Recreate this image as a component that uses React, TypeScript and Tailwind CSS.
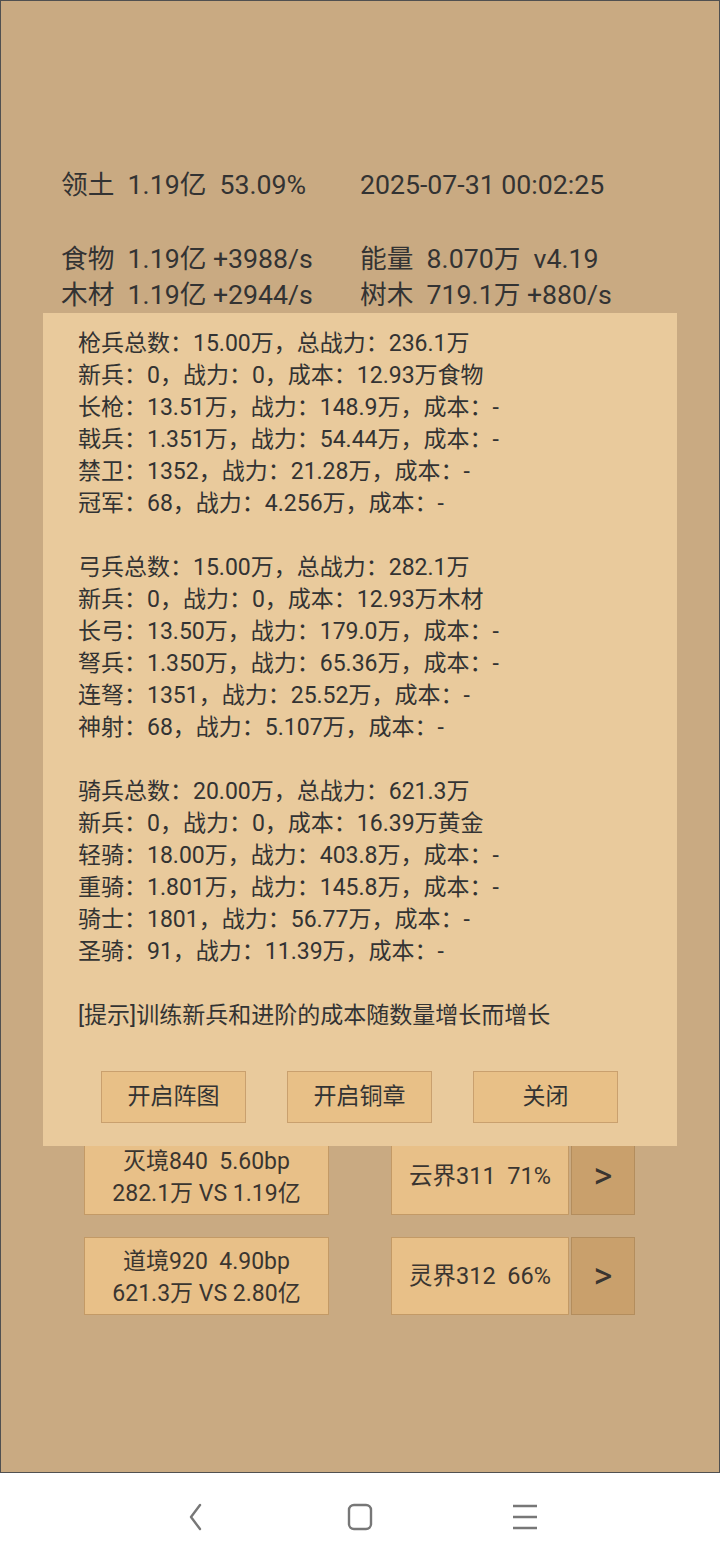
import React from "react";

const font = { fontFamily: "Roboto, 'Noto Sans CJK SC', sans-serif" };

const sections: string[][] = [
  [
    "枪兵总数：15.00万，总战力：236.1万",
    "新兵：0，战力：0，成本：12.93万食物",
    "长枪：13.51万，战力：148.9万，成本：-",
    "戟兵：1.351万，战力：54.44万，成本：-",
    "禁卫：1352，战力：21.28万，成本：-",
    "冠军：68，战力：4.256万，成本：-",
  ],
  [
    "弓兵总数：15.00万，总战力：282.1万",
    "新兵：0，战力：0，成本：12.93万木材",
    "长弓：13.50万，战力：179.0万，成本：-",
    "弩兵：1.350万，战力：65.36万，成本：-",
    "连弩：1351，战力：25.52万，成本：-",
    "神射：68，战力：5.107万，成本：-",
  ],
  [
    "骑兵总数：20.00万，总战力：621.3万",
    "新兵：0，战力：0，成本：16.39万黄金",
    "轻骑：18.00万，战力：403.8万，成本：-",
    "重骑：1.801万，战力：145.8万，成本：-",
    "骑士：1801，战力：56.77万，成本：-",
    "圣骑：91，战力：11.39万，成本：-",
  ],
];

function Row({ left, l2, r1, r2 }: { left: string; l2: string; r1: string; r2: string }) {
  return (
    <div className="flex gap-[62px]">
      <button className="w-[245px] h-[78px] pt-[3px] bg-[#e8c088] border border-[#c39a66] flex flex-col items-center justify-center text-[23px] leading-[32px] text-[#3a3530] whitespace-pre">
        <span>{left}</span>
        <span>{l2}</span>
      </button>
      <div className="flex gap-[2px]">
        <button className="w-[178px] h-[78px] pt-[2px] bg-[#e8c088] border border-[#c39a66] flex items-center justify-center text-[23.5px] text-[#3a3530] whitespace-pre">
          {r1}
        </button>
        <button className="w-[64px] h-[78px] bg-[#c9a06c] border border-[#b38d5d] flex items-center justify-center text-[36px] leading-none text-[#3a3530]">
          {r2}
        </button>
      </div>
    </div>
  );
}

export default function App() {
  return (
    <div className="w-[720px] h-[1560px] flex flex-col bg-white" style={font}>
      <div className="relative h-[1473px] bg-[#c9aa82] border border-[#505050] text-[#333]">
        <div className="pt-[166px] pl-[60px] text-[26.7px] leading-[36px] whitespace-pre">
          <div className="grid grid-cols-[299px_1fr]">
            <div>领土  1.19亿  53.09%</div>
            <div>2025-07-31 00:02:25</div>
          </div>
          <div className="grid grid-cols-[299px_1fr] mt-[38px]">
            <div>食物  1.19亿 +3988/s</div>
            <div>能量  8.070万  v4.19</div>
            <div>木材  1.19亿 +2944/s</div>
            <div>树木  719.1万 +880/s</div>
          </div>
        </div>

        <div className="mt-[824px] pl-[83px] flex flex-col gap-[22px]">
          <Row left="灭境840  5.60bp" l2="282.1万 VS 1.19亿" r1="云界311  71%" r2=">" />
          <Row left="道境920  4.90bp" l2="621.3万 VS 2.80亿" r1="灵界312  66%" r2=">" />
        </div>

        <div className="absolute left-[42px] top-[312px] w-[634px] h-[833px] bg-[#e9ca9c] flex flex-col">
          <div className="pt-[15px] pl-[35px] text-[23px] leading-[32px] text-[#333]">
            {sections.map((s, i) => (
              <div key={i} className={i > 0 ? "mt-[32px]" : ""}>
                {s.map((l) => (
                  <div key={l}>{l}</div>
                ))}
              </div>
            ))}
            <div className="mt-[32px]">[提示]训练新兵和进阶的成本随数量增长而增长</div>
          </div>
          <div className="mt-[39px] pl-[58px] flex gap-[41px]">
            {["开启阵图", "开启铜章", "关闭"].map((t) => (
              <button
                key={t}
                className="w-[145px] h-[52px] bg-[#e8c087] border border-[#c9a06e] text-[23px] text-[#333] flex items-center justify-center"
              >
                {t}
              </button>
            ))}
          </div>
        </div>
      </div>

      <div className="flex-1 flex items-center pl-[181px] gap-[137px]">
        <svg width="28" height="30" viewBox="0 0 28 30">
          <path d="M19 3 L10 15 L19 27" fill="none" stroke="#777" strokeWidth="2.4" strokeLinecap="round" strokeLinejoin="round" />
        </svg>
        <svg width="28" height="30" viewBox="0 0 28 30">
          <rect x="3" y="3" width="22" height="24" rx="5" fill="none" stroke="#777" strokeWidth="2.4" />
        </svg>
        <svg width="28" height="30" viewBox="0 0 28 30">
          <path d="M2 4 H26 M2 15 H26 M2 26 H26" stroke="#777" strokeWidth="2.4" />
        </svg>
      </div>
    </div>
  );
}
